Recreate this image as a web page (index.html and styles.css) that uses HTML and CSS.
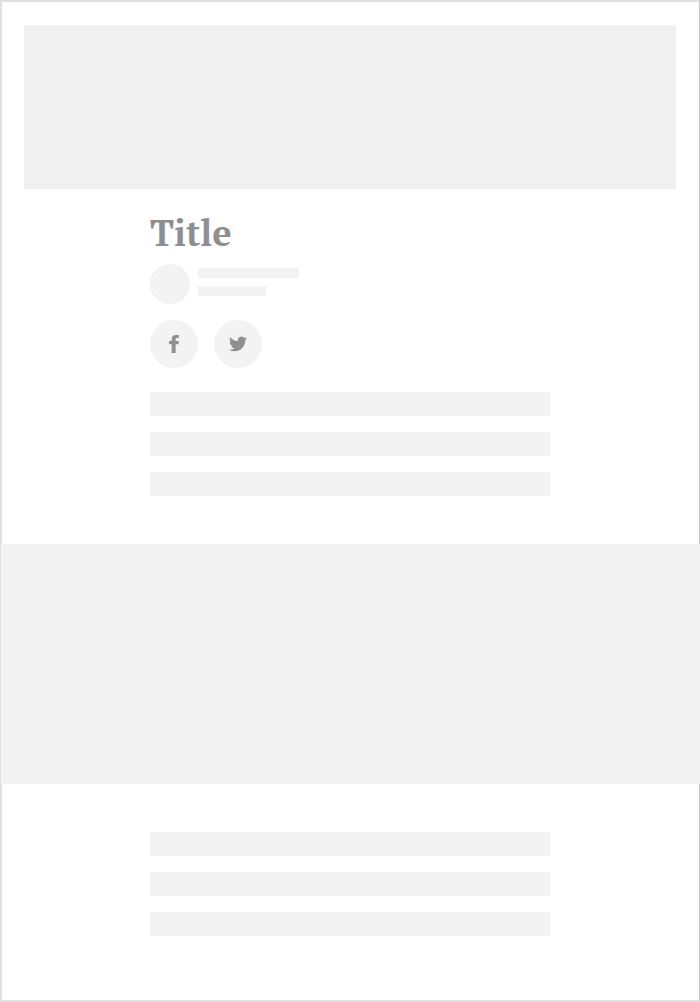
FILE: index.html
```
<!DOCTYPE html>
<html lang="en">
<head>
<meta charset="utf-8">
<meta name="viewport" content="width=device-width, initial-scale=1">
<title>Title</title>
<link rel="stylesheet" href="styles.css">
</head>
<body>
<article class="page">
  <div class="hero"></div>
  <header class="column intro">
    <h1 class="title">Title</h1>
    <div class="byline">
      <div class="avatar"></div>
      <div class="meta">
        <div class="meta-line"></div>
        <div class="meta-line meta-line-short"></div>
      </div>
    </div>
    <div class="share">
      <button class="share-button" type="button" aria-label="Share on Facebook">
        <svg width="10" height="18" viewBox="0 0 10 18" aria-hidden="true"><path d="M2.7 18V9.2H0V6.1h2.7V4.3C2.7 1.5 4.2 0 7 0h2.8v3.1H8C6.9 3.1 6.6 3.6 6.6 4.5v1.6h3.2l-.4 3.1H6.6V18z"/></svg>
      </button>
      <button class="share-button" type="button" aria-label="Share on Twitter">
        <svg width="18" height="16" viewBox="0 2 24 20" aria-hidden="true"><path d="M23.95 4.57a10 10 0 0 1-2.82.77 4.96 4.96 0 0 0 2.16-2.72c-.95.55-2 .96-3.13 1.18a4.92 4.92 0 0 0-8.38 4.48C7.69 8.1 4.07 6.13 1.64 3.16a4.82 4.82 0 0 0-.67 2.48c0 1.71.87 3.21 2.19 4.1a4.9 4.9 0 0 1-2.23-.62v.06a4.92 4.92 0 0 0 3.95 4.83 5 5 0 0 1-2.21.08 4.94 4.94 0 0 0 4.6 3.42A9.87 9.87 0 0 1 0 19.54a13.99 13.99 0 0 0 7.56 2.21c9.05 0 14-7.5 14-13.98 0-.21 0-.42-.02-.63a9.94 9.94 0 0 0 2.46-2.55z"/></svg>
      </button>
    </div>
  </header>
  <div class="column text">
    <div class="text-line"></div>
    <div class="text-line"></div>
    <div class="text-line"></div>
  </div>
  <div class="band"></div>
  <div class="column text">
    <div class="text-line"></div>
    <div class="text-line"></div>
    <div class="text-line"></div>
  </div>
</article>
</body>
</html>
```
FILE: styles.css
```
* {
  box-sizing: border-box;
}

body {
  margin: 0;
  background: #fff;
}

.page {
  min-height: 100vh;
  padding: 23px 1px 64px 0;
  border: 2px solid #e0e0e0;
  border-right: 1px solid #c4c4c4;
}

.hero {
  height: 164px;
  margin: 0 22px;
  background: #f0f0f0;
}

.column {
  width: calc(100% - 48px);
  max-width: 400px;
  margin: 0 auto;
}

.intro {
  padding-top: 23px;
}

.title {
  margin: 0 0 10px;
  color: #8f8f8f;
  font: bold 36px/42px "PT Serif", "Liberation Serif", serif;
}

.byline {
  display: flex;
  gap: 8px;
}

.avatar {
  width: 40px;
  height: 40px;
  border-radius: 50%;
  background: #f3f3f3;
}

.meta {
  display: grid;
  align-content: start;
  gap: 8px;
  padding-top: 4px;
}

.meta-line {
  width: 101px;
  height: 10px;
  background: #f3f3f3;
}

.meta-line-short {
  width: 68px;
}

.share {
  display: flex;
  gap: 16px;
  margin: 16px 0 24px;
}

.share-button {
  display: grid;
  place-items: center;
  width: 48px;
  height: 48px;
  padding: 0;
  border: 0;
  border-radius: 50%;
  background: #f3f3f3;
  cursor: pointer;
}

.share-button svg {
  fill: #8f8f8f;
}

.text {
  display: grid;
  gap: 16px;
}

.text-line {
  height: 24px;
  background: #f3f3f3;
}

.band {
  height: 240px;
  margin: 48px -2px 48px -1px;
  background: #f3f3f3;
}
```
